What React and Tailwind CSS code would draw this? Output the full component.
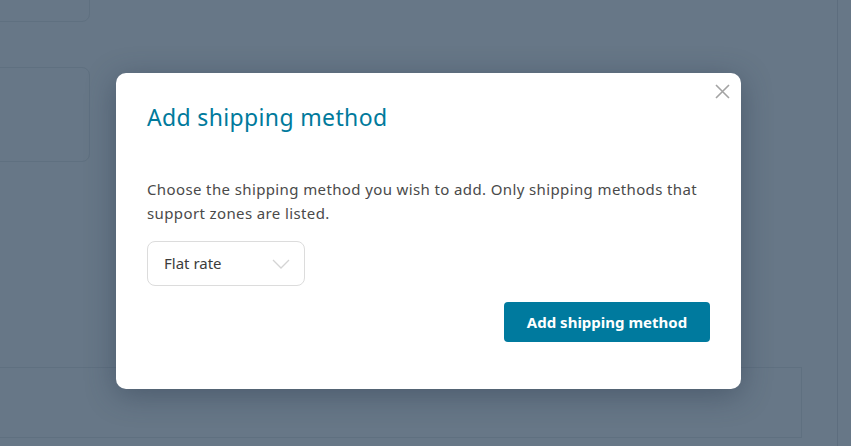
import React from "react";

function Chevron() {
  return (
    <svg width="18" height="10" viewBox="0 0 18 10" fill="none">
      <path d="M1 1l8 8 8-8" stroke="#d4d4d4" strokeWidth="1.3" />
    </svg>
  );
}

function CloseIcon() {
  return (
    <svg width="15" height="15" viewBox="0 0 15 15" fill="none">
      <path d="M1 1l13 13M14 1L1 14" stroke="#a3a3a3" strokeWidth="1.6" />
    </svg>
  );
}

export default function App() {
  return (
    <div
      className="relative w-[851px] h-[446px] overflow-hidden bg-[#677787]"
      style={{ fontFamily: '"Noto Sans", "Open Sans", sans-serif' }}
    >
      {/* page behind the overlay */}
      <div className="flex h-full">
        <div className="w-[838px] border-r border-[#5d6d7e] flex flex-col">
          <div className="-ml-[12px] -mt-[20px] w-[102px] h-[42px] rounded-lg border border-[#5f7080]" />
          <div className="-ml-[12px] mt-[45px] w-[102px] h-[95px] rounded-lg border border-[#5f7080]" />
          <div className="-ml-[2px] mt-[205px] w-[804px] h-[71px] border border-[#5f7080]" />
        </div>
      </div>

      {/* modal */}
      <div className="absolute left-[116px] top-[73px] w-[625px] h-[316px] bg-white rounded-[10px] shadow-[0_6px_30px_rgba(40,55,75,0.45)] px-[31px] pt-[28px]">
        <button className="absolute right-[11px] top-[11px]">
          <CloseIcon />
        </button>
        <h2 className="text-[23px] tracking-[0.35px] leading-[32px] text-[#007a9c]">Add shipping method</h2>
        <p className="mt-[44px] text-[15px] tracking-[0.38px] leading-[24px] text-[#4a4a4a]">
          Choose the shipping method you wish to add. Only shipping methods that
          support zones are listed.
        </p>
        <div className="mt-[16px] w-[158px] h-[45px] rounded-lg border border-[#dcdcdc] flex items-center justify-between pl-[16px] pr-[14px]">
          <span className="text-[15px] text-[#3c3c3c]">Flat rate</span>
          <Chevron />
        </div>
        <div className="flex justify-end mt-[16px]">
          <button className="h-[40px] w-[206px] rounded bg-[#007a9e] text-white text-[15px] font-bold">
            Add shipping method
          </button>
        </div>
      </div>
    </div>
  );
}
